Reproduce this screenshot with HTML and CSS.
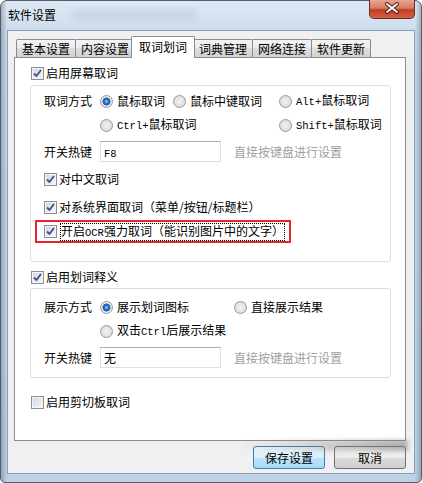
FILE: index.html
```html
<!DOCTYPE html>
<html lang="zh-CN">
<head>
    <meta charset="UTF-8">
    <title>软件设置</title>
    <link rel="stylesheet" href="styles.css">
</head>
<body>
    <div class="window">
        <div class="titlebar">
            <span class="title">软件设置</span>
            <span class="smudge"></span>
            <span class="close">
                <svg width="46" height="19" viewBox="0 0 46 19">
                    <path d="M18 5 L28 13 M28 5 L18 13" stroke="#4a1a12" stroke-width="4" stroke-linecap="round"/>
                    <path d="M18 5 L28 13 M28 5 L18 13" stroke="#fff" stroke-width="2" stroke-linecap="round"/>
                </svg>
            </span>
        </div>
        <div class="client">
            <div class="tabs">
                <div class="tab">基本设置</div>
                <div class="tab">内容设置</div>
                <div class="tab active">取词划词</div>
                <div class="tab">词典管理</div>
                <div class="tab">网络连接</div>
                <div class="tab">软件更新</div>
            </div>
            <div class="panel">
                <div class="check"><span class="box on"></span><span>启用屏幕取词</span></div>
                <div class="group g1">
                    <div class="field">
                        <span class="label">取词方式</span>
                        <div class="opts opts1">
                            <span class="radio"><span class="dot on"></span><span>鼠标取词</span></span>
                            <span class="radio"><span class="dot"></span><span>鼠标中键取词</span></span>
                            <span class="radio"><span class="dot"></span><span><span class="en">Alt+</span>鼠标取词</span></span>
                            <span class="radio wide"><span class="dot"></span><span><span class="en">Ctrl+</span>鼠标取词</span></span>
                            <span class="radio"><span class="dot"></span><span><span class="en">Shift+</span>鼠标取词</span></span>
                        </div>
                    </div>
                    <div class="hotkey">
                        <span class="label">开关热键</span>
                        <span class="input"><span class="en">F8</span></span>
                        <span class="hint">直接按键盘进行设置</span>
                    </div>
                    <div class="check c1"><span class="box on"></span><span>对中文取词</span></div>
                    <div class="check c2"><span class="box on"></span><span>对系统界面取词（菜单/按钮/标题栏）</span></div>
                    <div class="ocr">
                        <div class="check"><span class="box on"></span><span class="focus">开启<span class="en">OCR</span>强力取词（能识别图片中的文字）</span></div>
                    </div>
                </div>
                <div class="check after"><span class="box on"></span><span>启用划词释义</span></div>
                <div class="group g2">
                    <div class="field">
                        <span class="label">展示方式</span>
                        <div class="opts opts2">
                            <span class="radio"><span class="dot on"></span><span>展示划词图标</span></span>
                            <span class="radio"><span class="dot"></span><span>直接展示结果</span></span>
                            <span class="radio"><span class="dot"></span><span>双击<span class="en">Ctrl</span>后展示结果</span></span>
                        </div>
                    </div>
                    <div class="hotkey">
                        <span class="label">开关热键</span>
                        <span class="input">无</span>
                        <span class="hint">直接按键盘进行设置</span>
                    </div>
                </div>
                <div class="check last"><span class="box"></span><span>启用剪切板取词</span></div>
            </div>
            <div class="btns">
                <button class="btn default">保存设置</button>
                <button class="btn">取消</button>
            </div>
        </div>
    </div>
</body>
</html>
```

FILE: styles.css
```css
* {
    margin: 0;
    padding: 0;
    box-sizing: border-box;
}
body {
    background: #ffffff;
    font: 12px/16px "Noto Sans CJK SC", "Liberation Sans", sans-serif;
    color: #000000;
}
.en {
    font-family: "Liberation Mono", monospace;
    font-size: 10.5px;
}
.window {
    width: 422px;
    height: 483px;
    border: 1px solid #4f5d6e;
    border-radius: 7px 7px 5px 5px;
    background:
        linear-gradient(to right, rgba(70, 80, 95, 0.35), rgba(70, 80, 95, 0) 6px),
        linear-gradient(to left, rgba(70, 90, 85, 0.35), rgba(70, 90, 85, 0) 6px),
        linear-gradient(#dfe9f4, #c7d8eb 40px, #bdd1e7);
    display: flex;
    flex-direction: column;
}
.titlebar {
    height: 29px;
    display: flex;
    align-items: flex-start;
    padding: 0 6px 0 7px;
}
.title {
    line-height: 27px;
}
.smudge {
    width: 125px;
    height: 11px;
    margin: 9px 0 0 16px;
    background: #c8d5e6;
    border-radius: 6px;
    filter: blur(3px);
}
.close {
    margin: -1px 0 0 auto;
    width: 46px;
    height: 19px;
    border: 1px solid #6a2a20;
    border-top: none;
    border-radius: 0 0 5px 5px;
    background: linear-gradient(#eaa694, #d67a64 45%, #c13d25 55%, #d5604a);
    display: flex;
}
.close svg {
    margin: -1px;
}
.client {
    flex: 1;
    margin: 0 6px 8px 6px;
    background: #f0f0f0;
    border: 1px solid #8d9fb4;
    padding: 5px 8px 0 6px;
    display: flex;
    flex-direction: column;
}
.tabs {
    display: flex;
    align-items: flex-end;
    height: 21px;
    padding-left: 2px;
    position: relative;
    z-index: 1;
}
.tab {
    height: 18px;
    padding: 0 5px;
    margin-right: -1px;
    border: 1px solid #898c95;
    border-bottom: none;
    border-radius: 2px 2px 0 0;
    background: linear-gradient(#f3f3f3, #ebebeb 50%, #dedede 50%, #d2d2d2);
    line-height: 17px;
}
.tab.active {
    height: 22px;
    margin: 0 -2px -1px -3px;
    padding: 0 7px;
    background: #ffffff;
    line-height: 19px;
    position: relative;
    z-index: 2;
}
.panel {
    height: 384px;
    border: 1px solid #898c95;
    background: #ffffff;
    padding: 5px 14px 0 16px;
}
.check {
    display: flex;
    align-items: center;
    height: 20px;
    gap: 2px;
}
.box {
    width: 13px;
    height: 13px;
    border: 1px solid #8e8f8f;
    background: linear-gradient(135deg, #d3d6db, #f7f7f7);
    box-shadow: inset 0 0 0 1px #f4f4f4;
    flex-shrink: 0;
}
.box.on {
    background:
        url("data:image/svg+xml,%3Csvg xmlns='http://www.w3.org/2000/svg' width='11' height='11'%3E%3Cpath d='M2 5.5 L4.5 8 L9 2' fill='none' stroke='%233d4f8c' stroke-width='1.8'/%3E%3C/svg%3E") center/11px no-repeat,
        linear-gradient(135deg, #d3d6db, #f7f7f7);
}
.group {
    margin-left: -1px;
    border: 1px solid #d5dfe5;
    border-radius: 3px;
    padding-left: 13px;
}
.g1 {
    margin-top: 2px;
    padding-top: 4px;
    padding-bottom: 18px;
}
.g2 {
    margin-top: 1px;
    padding-top: 7px;
    padding-bottom: 9px;
}
.field {
    display: flex;
    align-items: flex-start;
}
.label {
    width: 56px;
    line-height: 22px;
    flex-shrink: 0;
}
.opts {
    display: grid;
    grid-auto-rows: 22px;
    row-gap: 2px;
    align-items: center;
}
.opts1 {
    grid-template-columns: 73px 106px auto;
}
.opts2 {
    grid-template-columns: 134px auto;
}
.radio {
    display: flex;
    align-items: center;
    gap: 4px;
    white-space: nowrap;
}
.radio.wide {
    grid-column: span 2;
}
.dot {
    width: 13px;
    height: 13px;
    border-radius: 50%;
    border: 1px solid #989898;
    background: radial-gradient(circle, #f2f2f2 0, #dcdcdc 6px);
    flex-shrink: 0;
}
.dot.on {
    background: radial-gradient(circle, #9fd3ff 0, #2a78c8 2px, #1c5aa5 3.5px, #f6f6f6 4.5px, #dcdcdc 6px);
}
.hotkey {
    display: flex;
    align-items: center;
    margin-top: 5px;
    height: 21px;
}
.input {
    width: 121px;
    height: 21px;
    border: 1px solid #dbdfe6;
    border-top-color: #abadb3;
    background: #ffffff;
    padding-left: 3px;
    line-height: 19px;
}
.hint {
    margin-left: 13px;
    color: #a0a0a0;
}
.c1 {
    margin-top: 7px;
}
.c2 {
    margin-top: 8px;
}
.ocr {
    margin: 3px 0 0 -9px;
    width: 256px;
    height: 23px;
    border: 2px solid #e8232b;
    padding-left: 7px;
    display: flex;
    align-items: center;
}
.focus {
    border: 1px dotted #000000;
    line-height: 13px;
    margin-left: 1px;
}
.after {
    margin-top: 5px;
}
.last {
    margin-top: 14px;
}
.btns {
    display: flex;
    justify-content: flex-end;
    gap: 9px;
    margin-top: 5px;
    position: relative;
}
.btns::before {
    content: "";
    position: absolute;
    left: 224px;
    top: -6px;
    width: 170px;
    height: 11px;
    background: linear-gradient(to right, rgba(120, 120, 120, 0), rgba(120, 120, 120, 0.55));
    filter: blur(2px);
    z-index: 1;
}
.btn {
    width: 72px;
    height: 23px;
    border: 1px solid #707070;
    border-radius: 3px;
    background: linear-gradient(#f2f2f2, #ebebeb 50%, #dddddd 50%, #cfcfcf);
    font: inherit;
    color: #000000;
}
.btn.default {
    border-color: #3c7fb1;
    background: linear-gradient(#eaf6fd, #d9f0fc 50%, #bee6fd 50%, #a7d9f5);
}
```
